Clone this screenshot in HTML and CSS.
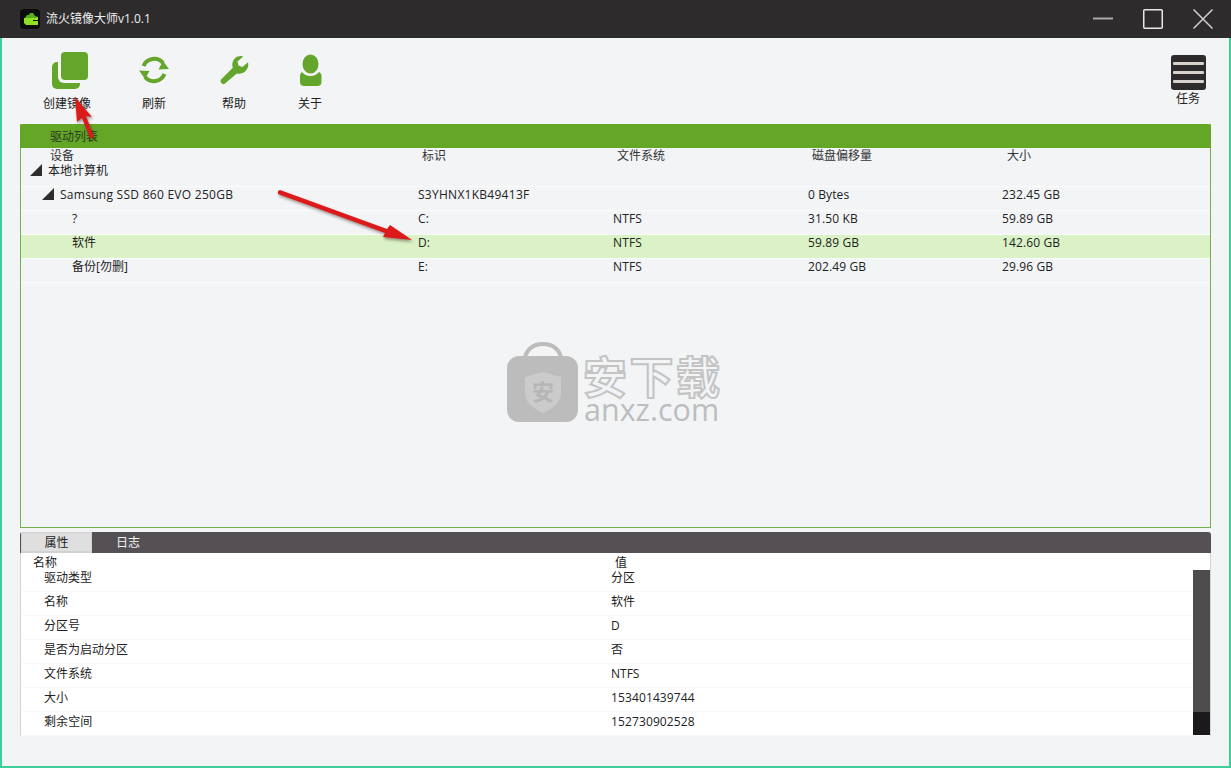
FILE: index.html
```html
<!DOCTYPE html>
<html lang="zh">
<head>
<meta charset="utf-8">
<title>流火镜像大师</title>
<link rel="stylesheet" href="styles.css">
</head>
<body>
<div class="window">
  <header class="titlebar">
    <svg class="logo" width="20" height="20" viewBox="0 0 20 20"><rect width="20" height="20" rx="4" fill="#0c0c0c"/><path d="M5 9l2-3h2l1-2h3l2 3 3 1v1z" fill="#55b01c"/><path d="M4 9h11l3-1v8H6l-2-2z" fill="#8fdf24"/><path d="M13 11h5v1h-5z" fill="#0c0c0c"/></svg>
    <span class="app-title">流火镜像大师v1.0.1</span>
    <div class="win-buttons">
      <svg width="20" height="20" viewBox="0 0 20 20"><path d="M0 9.500h20" stroke="#a9a9a9" stroke-width="2"/></svg>
      <svg width="20" height="20" viewBox="0 0 20 20"><rect x=".75" y=".75" width="18.500" height="18.500" rx="1" fill="none" stroke="#e8e8e8" stroke-width="1.500"/></svg>
      <svg width="20" height="20" viewBox="0 0 20 20"><path d="M.5.5l19 19M19.500.5l-19 19" stroke="#d0d0d0" stroke-width="1.500"/></svg>
    </div>
  </header>
  <div class="client">
    <nav class="toolbar">
      <div class="tool">
        <svg class="icon-copy" width="38" height="38" viewBox="0 0 38 38"><rect x="0" y="10" width="28" height="27" rx="5" fill="#64a62c"/><rect x="6" y="-1" width="32" height="32" rx="6" fill="#f2f4f6"/><rect x="9" y="0" width="27" height="28" rx="4" fill="#64a62c"/></svg>
        <span class="tool-label">创建镜像</span>
      </div>
      <div class="tool">
        <svg width="38" height="38" viewBox="0 0 38 38"><g fill="none" stroke="#64a62c" stroke-width="4"><path d="M8.500 14A11.500 11.500 0 0 1 28 11"/><path d="M29.500 22A11.500 11.500 0 0 1 10 25"/></g><path d="M34 17l-10.500 .5L28 9z" fill="#64a62c"/><path d="M4 18.500l10.500 .5L10 27z" fill="#64a62c"/></svg>
        <span class="tool-label">刷新</span>
      </div>
      <div class="tool">
        <svg width="38" height="38" viewBox="0 0 38 38"><path transform="translate(5 3) scale(.8)" d="M3 36c-2-1-3-3-2-5l15-15c-2-6 1-12 6-14 3-1 6-1 7 0l-7 6 1 5 5 2 7-6c1 4 0 8-3 11-3 3-7 4-11 3L7 35c-1 1-3 2-4 1z" fill="#64a62c"/></svg>
        <span class="tool-label">帮助</span>
      </div>
      <div class="tool">
        <svg width="38" height="38" viewBox="0 0 38 38"><ellipse cx="19.500" cy="12" rx="8" ry="9.500" fill="#64a62c"/><path d="M11 20c2 2.500 5 4 8.500 4s6.500-1.500 8.500-4c0 0 2.500 1 2.500 4v6c0 3-2 4-4 4H13c-2 0-4-1-4-4v-6c0-3 2-4 2-4z" fill="#64a62c"/></svg>
        <span class="tool-label">关于</span>
      </div>
      <div class="task">
        <div class="task-icon"><i></i><i></i><i></i></div>
        <span class="tool-label">任务</span>
      </div>
    </nav>

    <section class="drive-panel">
      <div class="panel-head">驱动列表</div>
      <div class="grid-row grid-head">
        <span class="c-first">设备</span><span>标识</span><span>文件系统</span><span>磁盘偏移量</span><span>大小</span>
      </div>
      <div class="grid-row row">
        <span class="lvl1"><b class="tri"></b>本地计算机</span><span></span><span></span><span></span><span></span>
      </div>
      <div class="grid-row row lat">
        <span class="lvl2 lat-wide"><b class="tri"></b>Samsung SSD 860 EVO 250GB</span><span class="lat-wide">S3YHNX1KB49413F</span><span></span><span>0 Bytes</span><span>232.45 GB</span>
      </div>
      <div class="grid-row row lat">
        <span class="lvl3">?</span><span>C:</span><span>NTFS</span><span>31.50 KB</span><span>59.89 GB</span>
      </div>
      <div class="grid-row row lat selected">
        <span class="lvl3">软件</span><span>D:</span><span>NTFS</span><span>59.89 GB</span><span>142.60 GB</span>
      </div>
      <div class="grid-row row lat">
        <span class="lvl3 cjk">备份[勿删]</span><span>E:</span><span>NTFS</span><span>202.49 GB</span><span>29.96 GB</span>
      </div>
    </section>

    <section class="props">
      <div class="tabs"><span class="tab active">属性</span><span class="tab">日志</span></div>
      <div class="props-body">
        <div class="props-table">
          <div class="p-head"><span>名称</span><span>值</span></div>
          <div class="p-row"><span>驱动类型</span><span>分区</span></div>
          <div class="p-row"><span>名称</span><span>软件</span></div>
          <div class="p-row"><span>分区号</span><span>D</span></div>
          <div class="p-row"><span>是否为启动分区</span><span>否</span></div>
          <div class="p-row"><span>文件系统</span><span>NTFS</span></div>
          <div class="p-row lat"><span>大小</span><span>153401439744</span></div>
          <div class="p-row lat"><span>剩余空间</span><span>152730902528</span></div>
        </div>
        <div class="scrollbar"><div class="thumb"></div></div>
      </div>
    </section>
  </div>

  <div class="watermark">
    <svg class="wm-bag" width="72" height="80" viewBox="0 0 72 80"><path d="M17 18C20 5 28 2 36 2s16 3 19 16" fill="none" stroke="#bcbcbc" stroke-width="4"/><rect x="0" y="14" width="71" height="66" rx="12" fill="#bcbcbc"/><path d="M36 30l18 5v16c0 10-9 16-18 20-9-4-18-10-18-20V35z" fill="#cbcbcb"/><text class="wm-glyph" x="36" y="58" text-anchor="middle">安</text></svg>
    <div class="wm-text"><span class="wm-cn">安下载</span><span class="wm-en">anxz.com</span></div>
  </div>

  <svg class="arrow arrow-a" width="40" height="60" viewBox="0 0 40 60"><path d="M9 1L26 21 20 20 28 41 24 42 16 22 11 26z" fill="#dc1a1a"/></svg>
  <svg class="arrow arrow-b" width="140" height="58" viewBox="0 0 140 58"><path d="M0 1L2 0 109 39 112 35 134 50 105 47 107 43 0 4z" fill="#dc1a1a"/></svg>
</div>
</body>
</html>
```
FILE: styles.css
```css
* { box-sizing: border-box; }
html, body { margin: 0; height: 100%; }
body {
  font-family: "Open Sans", "Noto Sans CJK SC", sans-serif;
  font-size: 12px;
  color: #222;
  background: #f2f4f6;
  overflow: hidden;
}
.window {
  position: relative;
  width: 1231px;
  height: 768px;
  display: flex;
  flex-direction: column;
}
.titlebar {
  height: 38px;
  flex: none;
  background: #2d2b2c;
  display: flex;
  align-items: center;
  padding-left: 20px;
  padding-right: 18px;
  color: #f0f0f0;
}
.logo { margin-right: 6px; }
.app-title { font-size: 12px; line-height: 22px; }
.win-buttons { margin-left: auto; display: flex; gap: 30px; }
.client {
  flex: 1;
  display: flex;
  flex-direction: column;
  border: 2px solid #3ed09b;
  border-top: 0;
  padding: 0 18px;
  background: #f2f4f6;
}
.toolbar {
  height: 86px;
  flex: none;
  display: flex;
  padding: 14px 5px 0 17px;
}
.tool {
  width: 60px;
  display: flex;
  flex-direction: column;
  align-items: center;
}
.tool:nth-child(1) { margin-right: 27px; }
.tool:nth-child(2) { margin-right: 20px; }
.tool:nth-child(3) { margin-right: 16px; }
.icon-copy { margin-left: 4px; margin-right: -4px; flex: none; }
.tool-label { line-height: 16px; white-space: nowrap; margin-top: 6px; }
.task {
  margin-left: auto;
  width: 36px;
  padding-top: 3px;
  display: flex;
  flex-direction: column;
  align-items: center;
}
.task .tool-label { margin-top: 1px; }
.task-icon {
  width: 35px;
  height: 35px;
  flex: none;
  background: #2d2b2c;
  border-radius: 3px;
  padding: 7px 2px;
  display: flex;
  flex-direction: column;
  justify-content: space-between;
}
.task-icon i { display: block; height: 3px; background: #d8d2cc; border-radius: 1px; }
.drive-panel {
  height: 404px;
  flex: none;
  border: 1px solid #76b04a;
  border-top: 0;
}
.panel-head {
  height: 24px;
  margin: 0 -1px;
  background: #64a626;
  border-radius: 3px 3px 0 0;
  padding-left: 30px;
  line-height: 25px;
  color: #2b3a20;
}
.grid-row {
  display: grid;
  grid-template-columns: 397px 195px 195px 194px 1fr;
}
.grid-head { height: 15px; line-height: 16px; color: #333; }
.grid-head span { padding-left: 4px; }
.grid-head .c-first { padding-left: 29px; }
.grid-head span:last-child { padding-left: 5px; }
.row {
  height: 24px;
  line-height: 16px;
  border-bottom: 1px solid #fbfcfc;
}
.lat { letter-spacing: .12px; }
.lat-wide { letter-spacing: .27px; }
.cjk { letter-spacing: 0; }
.row.selected { background: #daf2c6; }
.lvl1, .lvl2, .lvl3 { display: flex; align-items: flex-start; }
.lvl1 { padding-left: 27px; }
.lvl2 { padding-left: 39px; }
.lvl3 { padding-left: 51px; }
.tri {
  width: 0;
  height: 0;
  flex: none;
  margin: 1px 6px 0 -18px;
  border-style: solid;
  border-width: 0 0 12px 12px;
  border-color: transparent transparent #2d2d2d transparent;
}
.props {
  margin-top: 4px;
  height: 204px;
  flex: none;
}
.tabs {
  height: 21px;
  background: #545053;
  border-radius: 3px 3px 0 0;
  display: flex;
  line-height: 22px;
}
.tab { width: 72px; text-align: center; color: #f2f2f2; }
.tab.active {
  margin-left: 1px;
  width: 71px;
  background: #dfdfdf;
  border: 1px solid #d2d2d2;
  border-bottom-width: 2px;
  line-height: 20px;
  color: #222;
}
.props-body {
  height: 183px;
  position: relative;
  background: #fff;
  border: 1px solid #d4d4d4;
  border-top: 0;
}
.p-head {
  height: 15px;
  line-height: 19px;
  display: grid;
  grid-template-columns: 590px 1fr;
}
.p-head span:first-child { padding-left: 12px; }
.p-head span:last-child { padding-left: 4px; }
.p-row {
  height: 24px;
  line-height: 20px;
  display: grid;
  grid-template-columns: 590px 1fr;
  border-bottom: 1px solid #fafafa;
}
.p-row span:first-child { padding-left: 23px; }
.scrollbar {
  position: absolute;
  right: 0;
  top: 17px;
  bottom: 0;
  width: 17px;
  background: #4f4c4e;
  display: flex;
  align-items: flex-end;
}
.thumb { width: 100%; height: 23px; background: #1b191b; }
.watermark {
  position: absolute;
  left: 507px;
  top: 342px;
  display: flex;
  gap: 4px;
}
.wm-glyph {
  font-family: "Noto Sans CJK SC", sans-serif;
  font-size: 22px;
  font-weight: 700;
  fill: #b6b6b6;
}
.wm-text { display: flex; flex-direction: column; padding-top: 10px; }
.wm-cn {
  font-family: "Noto Sans CJK SC", sans-serif;
  font-size: 44px;
  font-weight: 700;
  line-height: 46px;
  letter-spacing: 2.500px;
  color: #f2f4f6;
  -webkit-text-stroke: 2px #c4c4c4;
  white-space: nowrap;
}
.wm-en {
  font-family: "Open Sans", sans-serif;
  font-size: 30.500px;
  line-height: 22px;
  color: #bdbdbd;
  padding-left: 1px;
}
.arrow {
  position: absolute;
  pointer-events: none;
  filter: drop-shadow(1px 2px 1.500px rgba(60, 20, 20, .45));
}
.arrow-a { left: 66px; top: 96px; }
.arrow-b { left: 278px; top: 190px; }
```
